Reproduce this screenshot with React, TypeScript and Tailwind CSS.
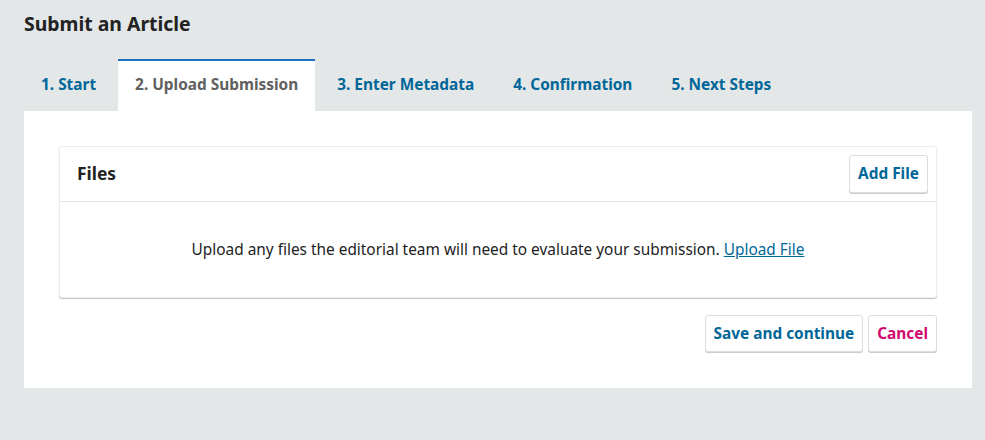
const tabs = ["1. Start", "2. Upload Submission", "3. Enter Metadata", "4. Confirmation", "5. Next Steps"];

export default function App() {
  const active = 1;
  return (
    <div className="min-h-[440px] bg-[#e4e7e8] px-6 pt-[11px] font-['Noto_Sans',sans-serif] text-[#222]">
      <h1 className="text-[19.4px] font-bold leading-[26px] text-[#222]">Submit an Article</h1>

      <div className="mt-[22px] flex gap-[5px]">
        {tabs.map((t, i) => (
          <div
            key={t}
            className={
              i === active
                ? "border-t-2 border-[#1e6fbf] bg-white px-[17px] pt-[13px] pb-[15px] text-[15.4px] font-bold leading-[22px] text-[#606060]"
                : "border-t-2 border-transparent px-[17px] pt-[13px] pb-[15px] text-[15.4px] font-bold leading-[22px] text-[#006798]"
            }
          >
            {t}
          </div>
        ))}
      </div>

      <div className="w-[948px] bg-white px-[35px] pt-[35px] pb-[36px]">
        <div className="rounded-[3px] border border-[#eee] bg-white shadow-[0_1px_1px_rgba(0,0,0,0.25)]">
          <div className="flex h-[55px] items-center justify-between border-b border-[#e6e6e6] pl-[17px] pr-[8px]">
            <span className="pb-[2px] text-[17.4px] font-bold text-[#222]">Files</span>
            <button className="h-[38px] rounded-[3px] border border-[#ddd] bg-white px-[8px] text-[15.4px] font-bold text-[#006798] shadow-[0_1px_0_#ccc]">
              Add File
            </button>
          </div>
          <div className="flex h-[95px] items-center justify-center pt-[1px] text-[15.4px]">
            <p>
              Upload any files the editorial team will need to evaluate your submission.{" "}
              <a href="#" className="text-[#006798] underline">
                Upload File
              </a>
            </p>
          </div>
        </div>

        <div className="mt-[17px] flex justify-end gap-[5px]">
          <button className="h-[37px] rounded-[3px] border border-[#ddd] bg-white px-[8px] text-[15.4px] font-bold text-[#006798] shadow-[0_1px_0_#ccc]">
            Save and continue
          </button>
          <button className="h-[37px] rounded-[3px] border border-[#ddd] bg-white px-[8px] text-[15.4px] font-bold text-[#d00a6c] shadow-[0_1px_0_#ccc]">
            Cancel
          </button>
        </div>
      </div>
    </div>
  );
}
